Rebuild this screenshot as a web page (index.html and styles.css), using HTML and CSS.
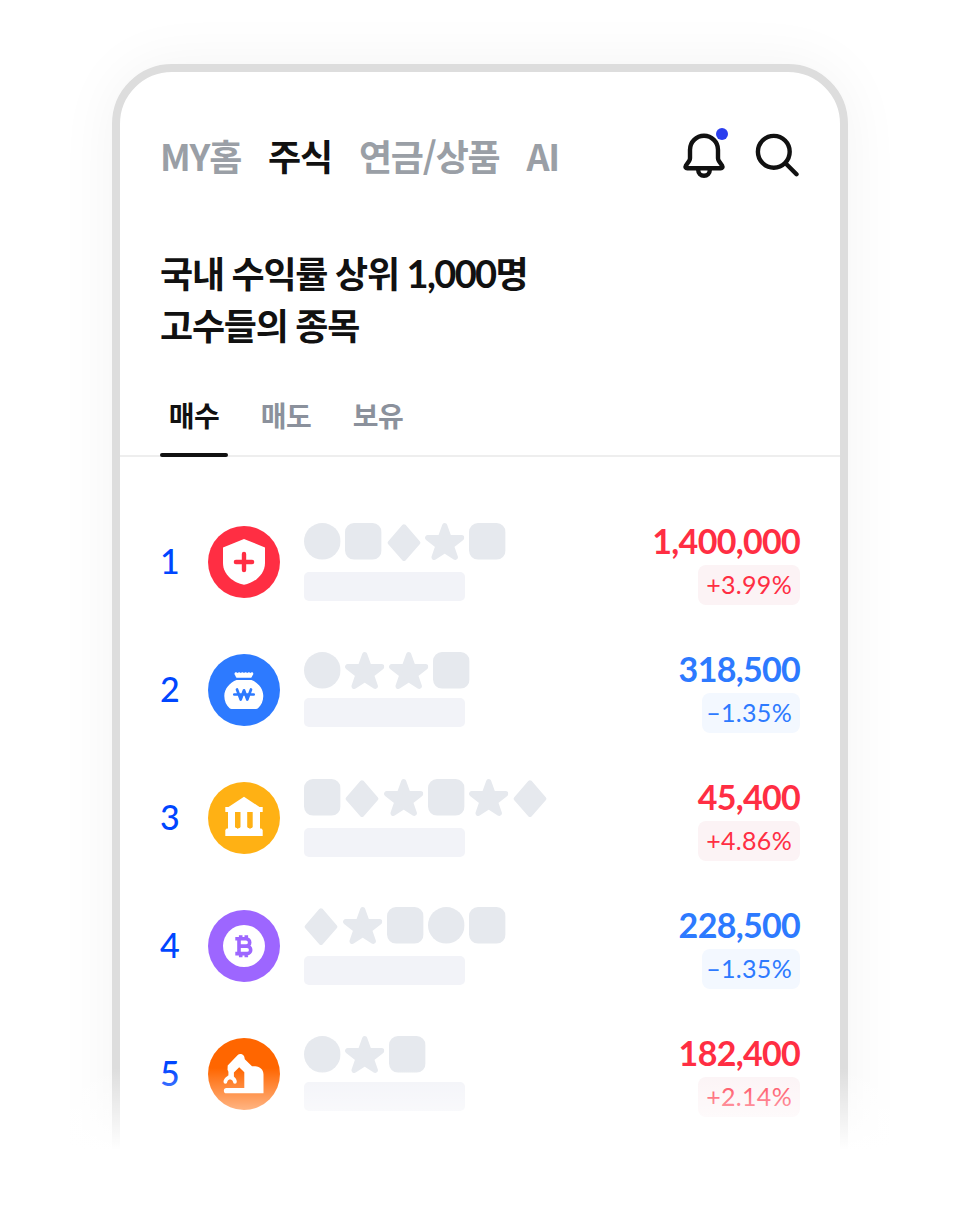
FILE: index.html
```html
<!doctype html>
<html lang="ko">
    <head>
        <meta charset="utf-8" />
        <title>고수들의 종목</title>
        <link rel="stylesheet" href="styles.css" />
    </head>
    <body>
        <svg class="symbols">
            <symbol id="circle" viewBox="0 0 36.6 37"><circle cx="18.3" cy="18.3" r="18.3" /></symbol>
            <symbol id="square" viewBox="0 0 36.6 37"><rect width="36.6" height="36.6" rx="9" /></symbol>
            <symbol id="diamond" viewBox="0 0 34 38"><path d="M17 3.6 31 19.7 17 35.7 3 19.7z" stroke-width="4.6" /></symbol>
            <symbol id="star" viewBox="0 0 39.4 37"><path d="M19.7 2.9 23.9 14.6 36.6 14.8 26.4 23 30.2 34.2 19.7 27.4 9.2 34.2 13 23 2.8 14.8 15.5 14.6z" stroke-width="5.4" /></symbol>
        </svg>
        <main class="phone">
            <header>
                <nav>
                    <span>MY홈</span>
                    <span class="activo">주식</span>
                    <span>연금/상품</span>
                    <span>AI</span>
                </nav>
                <div class="iconos">
                    <div class="campana">
                        <svg width="44" height="48" viewBox="0 0 44 48">
                            <path d="M22 3.8c-7.7 0-14 6.3-14 14v8.4c0 1-.3 2-.9 2.9l-3.3 4.7c-.8 1.3.1 2.5 1.4 2.5h33.6c1.3 0 2.2-1.2 1.4-2.5l-3.3-4.7c-.6-.9-.9-1.9-.9-2.9v-8.4c0-7.7-6.3-14-14-14z" />
                            <path d="M16.2 37v1a5.8 5.8 0 0 0 11.6 0v-1" />
                        </svg>
                        <i class="punto"></i>
                    </div>
                    <svg width="44" height="48" viewBox="0 0 44 48">
                        <circle cx="18.8" cy="19.8" r="15.9" />
                        <path d="m30.5 31.3 11 10.9" />
                    </svg>
                </div>
            </header>
            <h1>국내 수익률 상위 <span class="num">1,000</span>명<br />고수들의 종목</h1>
            <div class="tabs">
                <span class="activo">매수</span>
                <span>매도</span>
                <span>보유</span>
            </div>
            <ol>
                <li>
                    <b class="puesto">1</b>
                    <svg class="logo rojo" viewBox="0 0 72 72">
                        <path fill="#fff" d="M36 13 57 21.4V37c0 11.500-10.500 20-21 21.700C25.500 57 15 48.500 15 37V21.400z" />
                        <path class="trazo" stroke-width="4.400" d="M36 27.900v16.200M27.900 36h16.200" />
                    </svg>
                    <div class="nombre">
                        <div class="formas">
                            <svg class="f"><use href="#circle" /></svg>
                            <svg class="f"><use href="#square" /></svg>
                            <svg class="f rombo"><use href="#diamond" /></svg>
                            <svg class="f estrella"><use href="#star" /></svg>
                            <svg class="f"><use href="#square" /></svg>
                        </div>
                        <div class="barra"></div>
                    </div>
                    <div class="precio sube"><strong>1,400,000</strong><span>+3.99%</span></div>
                </li>
                <li>
                    <b class="puesto">2</b>
                    <svg class="logo azul" viewBox="0 0 72 72">
                        <path fill="#fff" d="M26.500 19.500c.3-1.300 2-1.600 3-.6 1-1 2.400-1 3.200 0 1-1 2.500-1 3.300 0 .8-1 2.300-1 3.300 0 .8-1 2.200-1 3.200 0 1-1 2.600-.7 2.800.6.2 1.300-1 2-1.300 2.900-.2.900-.8 1.400-1.600 1.400H29.300c-.8 0-1.400-.5-1.600-1.400-.2-.9-1.400-1.600-1.200-2.900zM28.500 26h15c6.500 2.500 11.800 8.600 11.800 16 0 5-2 9.300-5.300 12.200-.6.500-1.200.8-2 .8H23.600c-.8 0-1.400-.3-2-.8-3.300-2.900-5.300-7.200-5.300-12.200 0-7.400 5.700-13.500 12.200-16z" />
                        <path class="trazo" stroke-width="2.700" d="M26.300 40.500h19.400M29 35.500l3.700 10L36 36.300l3.300 9.200 3.700-10" />
                    </svg>
                    <div class="nombre junto">
                        <div class="formas">
                            <svg class="f"><use href="#circle" /></svg>
                            <svg class="f estrella"><use href="#star" /></svg>
                            <svg class="f estrella"><use href="#star" /></svg>
                            <svg class="f"><use href="#square" /></svg>
                        </div>
                        <div class="barra"></div>
                    </div>
                    <div class="precio baja"><strong>318,500</strong><span>–1.35%</span></div>
                </li>
                <li>
                    <b class="puesto">3</b>
                    <svg class="logo amarillo" viewBox="0 0 72 72">
                        <path fill="#fff" fill-rule="evenodd" d="M36 14.700 51.500 25H54.700v5H52v16.600h1.400l1.300 1.300V54H17.300v-6.100l1.300-1.300H20V30h-2.700v-5h3.200zM27 30v15l1 1h.8l1 1 1-1h.8l.9-1V30zm12.200 0v15l1 1h.8l1 1 1-1h.8l.9-1V30z" />
                    </svg>
                    <div class="nombre">
                        <div class="formas">
                            <svg class="f"><use href="#square" /></svg>
                            <svg class="f rombo"><use href="#diamond" /></svg>
                            <svg class="f estrella"><use href="#star" /></svg>
                            <svg class="f"><use href="#square" /></svg>
                            <svg class="f estrella"><use href="#star" /></svg>
                            <svg class="f rombo"><use href="#diamond" /></svg>
                        </div>
                        <div class="barra"></div>
                    </div>
                    <div class="precio sube"><strong>45,400</strong><span>+4.86%</span></div>
                </li>
                <li>
                    <b class="puesto">4</b>
                    <svg class="logo morado" viewBox="0 0 72 72">
                        <circle cx="36" cy="36" r="21" fill="#fff" />
                        <path fill="none" stroke="currentColor" stroke-width="3.600" d="M27.300 28.700h10.700a3.700 3.700 0 0 1 0 7.400H31M38 36.200h1a3.700 3.700 0 0 1 0 7.400H27.300M31 28.700v14.900M32.700 25.200v3M38.300 25.200v3M32.700 44v3.200M38.300 44v3.200" />
                    </svg>
                    <div class="nombre">
                        <div class="formas">
                            <svg class="f rombo"><use href="#diamond" /></svg>
                            <svg class="f estrella"><use href="#star" /></svg>
                            <svg class="f"><use href="#square" /></svg>
                            <svg class="f"><use href="#circle" /></svg>
                            <svg class="f"><use href="#square" /></svg>
                        </div>
                        <div class="barra"></div>
                    </div>
                    <div class="precio baja"><strong>228,500</strong><span>–1.35%</span></div>
                </li>
                <li>
                    <b class="puesto">5</b>
                    <svg class="logo naranja" viewBox="0 0 72 72">
                        <path fill="#fff" d="M19.700 27.500 29.500 17.300a4 4 0 0 1 6.800 1.500l.5 2.500 7.200 7h3.200c4.800 0 8.300 3.600 8.300 8.300V55.300H18.500a2.600 2.600 0 0 1 0-5.300h17.800V34.300l-5.100-5-5.300 5.200v5.200h-5.500v-6l-.9-2z" />
                        <path stroke="#fff" stroke-width="3.800" stroke-linecap="round" fill="none" d="M17.400 43.800c0-2.400 1.600-3.300 3.300-4.300h2.500c2 .8 3.700 2 3.700 4.300" />
                    </svg>
                    <div class="nombre junto">
                        <div class="formas">
                            <svg class="f"><use href="#circle" /></svg>
                            <svg class="f estrella"><use href="#star" /></svg>
                            <svg class="f"><use href="#square" /></svg>
                        </div>
                        <div class="barra"></div>
                    </div>
                    <div class="precio sube"><strong>182,400</strong><span>+2.14%</span></div>
                </li>
            </ol>
        </main>
    </body>
</html>
```
FILE: styles.css
```css
* {
    margin: 0;
    padding: 0;
    box-sizing: border-box;
}
body {
    position: relative;
    height: 1212px;
    padding-top: 64px;
    overflow: hidden;
    background: white;
    color: #111;
    font-family: "Noto Sans CJK KR", sans-serif;
}
/* desvanecido inferior */
body::after {
    content: "";
    position: absolute;
    left: 0;
    right: 0;
    top: 1068px;
    bottom: 0;
    background: linear-gradient(rgba(255, 255, 255, 0), white 82px);
}
.symbols {
    position: absolute;
    width: 0;
    height: 0;
}
.phone {
    width: 736px;
    height: 1200px;
    margin: 0 auto;
    border: 8px solid #ddd;
    border-radius: 60px;
    box-shadow: 0 0 60px rgba(0, 0, 0, 0.05);
}
header {
    display: flex;
    justify-content: space-between;
    height: 108px;
    padding: 60px 41px 0 40px;
}
nav {
    display: flex;
    gap: 27px;
    height: 48px;
    line-height: 46px;
    font-size: 36px;
    font-weight: 700;
    letter-spacing: -1.2px;
    color: #9a9fa6;
}
nav .activo {
    color: #111;
}
.iconos {
    display: flex;
    gap: 29px;
}
.iconos svg {
    display: block;
    fill: none;
    stroke: #111;
    stroke-width: 4.4;
    stroke-linecap: round;
    stroke-linejoin: round;
}
.campana {
    position: relative;
}
.punto {
    position: absolute;
    left: 34px;
    top: -4px;
    width: 12px;
    height: 12px;
    border-radius: 50%;
    background: #2b3eee;
}
h1 {
    margin-top: 66px;
    padding-left: 40px;
    font-size: 36px;
    line-height: 52px;
    letter-spacing: -1.2px;
    word-spacing: -1.2px;
}
.num {
    font-family: Lato, sans-serif;
    font-size: 38px;
    font-weight: 700;
    line-height: 1;
    letter-spacing: -1.6px;
}
.tabs {
    display: flex;
    gap: 24px;
    height: 74px;
    margin-top: 33px;
    padding-left: 40px;
    border-bottom: 2px solid #eee;
    font-size: 28px;
    line-height: 65px;
    font-weight: 700;
    letter-spacing: -0.6px;
    color: #8b919c;
}
.tabs span {
    width: 68px;
    height: 74px;
    text-align: center;
}
.tabs .activo {
    position: relative;
    color: #111;
}
.tabs .activo::after {
    content: "";
    position: absolute;
    left: 0;
    bottom: 0;
    width: 68px;
    height: 4px;
    border-radius: 2px;
    background: #111;
}
ol {
    padding: 40.5px 40px 0;
    list-style: none;
    font-family: Lato, sans-serif;
}
li {
    display: flex;
    align-items: center;
    height: 128px;
}
.puesto {
    width: 48px;
    padding-bottom: 2px;
    font-size: 34px;
    font-weight: 500;
    color: #0046ff;
}
.logo {
    width: 72px;
    height: 72px;
    margin-right: 24px;
    border-radius: 50%;
    background: currentColor;
}
.trazo {
    fill: none;
    stroke: currentColor;
    stroke-linecap: round;
    stroke-linejoin: round;
}
.rojo {
    color: #ff2e43;
}
.azul {
    color: #2d7aff;
}
.amarillo {
    color: #ffb114;
}
.morado {
    color: #9d66ff;
}
.naranja {
    color: #ff6600;
}
.nombre {
    display: flex;
    flex-direction: column;
    gap: 12px;
}
.junto {
    gap: 9.5px;
}
.formas {
    display: flex;
    gap: 4.7px;
}
.f {
    width: 36.6px;
    height: 37px;
    fill: #e6e9ee;
    stroke: #e6e9ee;
    stroke-width: 0;
    stroke-linejoin: round;
    overflow: visible;
}
.rombo {
    width: 34px;
    height: 38px;
    margin-bottom: -1px;
}
.estrella {
    width: 39.4px;
}
.barra {
    width: 160.5px;
    height: 29px;
    border-radius: 5px;
    background: #f2f3f8;
}
.precio {
    display: flex;
    flex-direction: column;
    align-items: flex-end;
    margin-left: auto;
    padding-top: 3px;
}
.precio strong {
    font-size: 34px;
    line-height: 39px;
    font-weight: 700;
    letter-spacing: -0.7px;
}
.precio span {
    height: 40px;
    margin-top: 5px;
    padding: 0 8px;
    border-radius: 8px;
    font-size: 25px;
    line-height: 38px;
    letter-spacing: 0.3px;
}
.sube {
    color: #ff2e43;
}
.sube span {
    background: #fcf3f5;
}
.baja {
    color: #2d7aff;
}
.baja span {
    padding-left: 4px;
    background: #f3f8ff;
}
```
